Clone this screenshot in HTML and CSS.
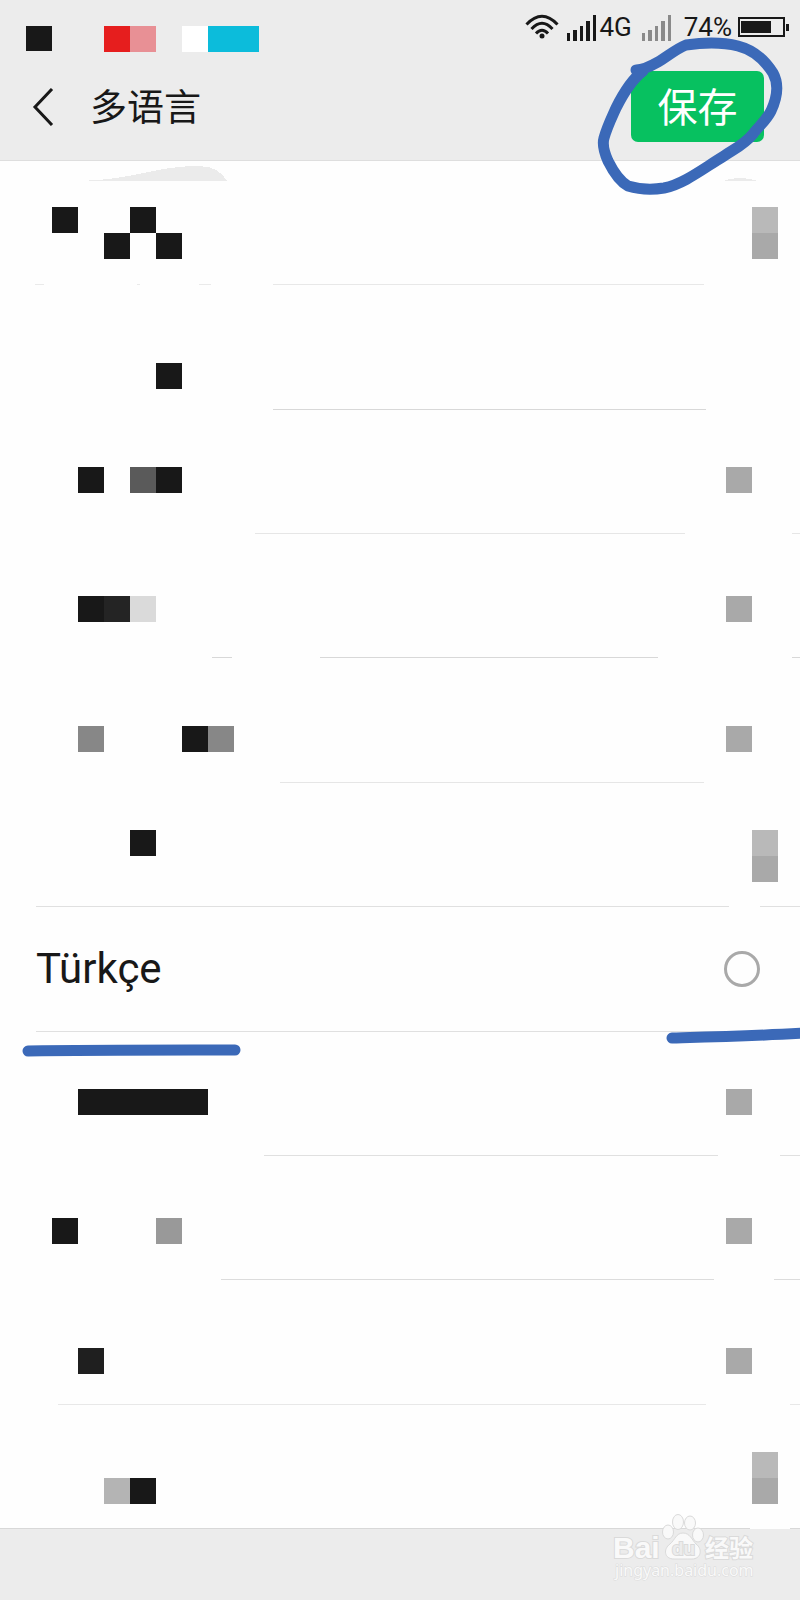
FILE: index.html
```html
<!DOCTYPE html>
<html lang="zh">
<head>
    <meta charset="UTF-8">
    <meta name="viewport" content="width=device-width, initial-scale=1">
    <title>多语言</title>
    <link rel="stylesheet" href="styles.css">
</head>
<body>
<header class="header">
    <div class="status-bar">
        <svg class="status-blocks" width="260" height="53" shape-rendering="crispEdges">
            <rect x="26" y="26" width="26" height="25" fill="#181818"/>
            <rect x="104" y="26" width="26" height="26" fill="#e61e1e"/>
            <rect x="130" y="26" width="26" height="26" fill="#e89095"/>
            <rect x="182" y="26" width="26" height="26" fill="#fff"/>
            <rect x="208" y="26" width="51" height="26" fill="#0cbcdb"/>
        </svg>
        <div class="status-icons">
            <svg class="wifi" width="34" height="26" fill="none" stroke="#181818" stroke-width="3">
                <path d="M1.500 10.500 Q17 -6 32.500 10.500"/>
                <path d="M6.500 15 Q17 3.500 27.500 15"/>
                <path d="M11 19.500 Q17 13 23 19.500"/>
                <circle cx="17" cy="22" r="2.500" fill="#181818" stroke="none"/>
            </svg>
            <svg class="signal" width="30" height="27" fill="#181818">
                <path d="M0 19h3v8h-3zM6 16h4v11h-4zM13 12h3v15h-3zM19 7h4v20h-4zM26 1h3v26h-3z"/>
            </svg>
            <span class="network">4G</span>
            <svg class="signal signal-off" width="30" height="27" fill="#8a8a8a">
                <path d="M0 19h3v8h-3zM6 16h4v11h-4zM13 12h3v15h-3zM19 7h4v20h-4zM26 1h3v26h-3z"/>
            </svg>
            <span class="battery-text">74%</span>
            <svg class="battery" width="52" height="21">
                <rect x="1" y="1" width="45" height="18" fill="none" stroke="#181818" stroke-width="2"/>
                <rect x="3" y="4" width="30" height="12" fill="#181818"/>
                <rect x="48" y="7" width="3" height="7" fill="#181818"/>
            </svg>
        </div>
    </div>
    <div class="title-bar">
        <a class="back" href="#" aria-label="返回">
            <svg width="22" height="38" fill="none" stroke="#181818" stroke-width="3">
                <path d="M20 1 L3 19 L20 37"/>
            </svg>
        </a>
        <h1 class="title">多语言</h1>
        <button class="save" type="button">保存</button>
    </div>
    <svg class="pen pen-circle" width="200" height="200">
        <path d="M36 70 C42 70 51 66 58 62 C68 56 76 49 86 45 C100 43 122 42 138 46 C154 50 166 62 173 73 C179 84 178 96 171 111 C166 121 158 127 153 134 C144 145 134 149 124 156 C104 168 84 184 64 188 C52 190 38 189 28 186 C19 181 13 171 8 161 C4 152 2 145 4 138 C7 127 12 117 16 108 C22 96 31 80 43 71"/>
    </svg>
</header>

<form class="list">
    <div class="row row-1">
        <div class="cells">
            <svg width="260" height="124">
                <path d="M78 20 C135 19 154 5 198 5 C213 5 221 10 227 20z" fill="#ebebeb"/>
                <path d="M52 46h26v26h-26zM130 46h26v26h-26zM104 72h26v26h-26zM156 72h26v26h-26z" fill="#181818"/>
                <path d="M35 123h9v1h-9zM137 123h3v1h-3zM199 123h12v1h-12z" fill="#eaeaea"/>
            </svg>
            <svg width="100" height="124">
                <path d="M23 20 Q39 14 58 20z" fill="#ebebeb"/>
                <rect x="52" y="46" width="26" height="26" fill="#b9b9b9"/>
                <rect x="52" y="72" width="26" height="26" fill="#a9a9a9"/>
            </svg>
        </div>
        <div class="rule"><span class="line"></span><span class="tail"></span></div>
    </div>
    <div class="row row-2">
        <div class="cells">
            <svg width="260" height="124">
                <rect x="156" y="78" width="26" height="26" fill="#181818"/>
            </svg>
        </div>
        <div class="rule"><span class="line"></span><span class="tail"></span></div>
    </div>
    <div class="row row-3">
        <div class="cells">
            <svg width="260" height="124">
                <rect x="78" y="57" width="26" height="26" fill="#181818"/>
                <rect x="130" y="57" width="26" height="26" fill="#5a5a5a"/>
                <rect x="156" y="57" width="26" height="26" fill="#181818"/>
            </svg>
            <svg width="100" height="124">
                <rect x="26" y="57" width="26" height="26" fill="#a9a9a9"/>
            </svg>
        </div>
        <div class="rule"><span class="line"></span><span class="tail"></span></div>
    </div>
    <div class="row row-4">
        <div class="cells">
            <svg width="260" height="124">
                <rect x="78" y="62" width="26" height="26" fill="#181818"/>
                <rect x="104" y="62" width="26" height="26" fill="#242424"/>
                <rect x="130" y="62" width="26" height="26" fill="#dadada"/>
                <rect x="212" y="123" width="20" height="1" fill="#d8d8d8"/>
            </svg>
            <svg width="100" height="124">
                <rect x="26" y="62" width="26" height="26" fill="#a9a9a9"/>
            </svg>
        </div>
        <div class="rule"><span class="line"></span><span class="tail"></span></div>
    </div>
    <div class="row row-5">
        <div class="cells">
            <svg width="260" height="124">
                <rect x="78" y="68" width="26" height="26" fill="#878787"/>
                <rect x="182" y="68" width="26" height="26" fill="#181818"/>
                <rect x="208" y="68" width="26" height="26" fill="#878787"/>
            </svg>
            <svg width="100" height="124">
                <rect x="26" y="68" width="26" height="26" fill="#a9a9a9"/>
            </svg>
        </div>
        <div class="rule"><span class="line"></span><span class="tail"></span></div>
    </div>
    <div class="row row-6">
        <div class="cells">
            <svg width="260" height="124">
                <rect x="130" y="47" width="26" height="26" fill="#181818"/>
            </svg>
            <svg width="100" height="124">
                <rect x="52" y="47" width="26" height="26" fill="#b9b9b9"/>
                <rect x="52" y="73" width="26" height="26" fill="#a9a9a9"/>
            </svg>
        </div>
        <div class="rule"><span class="line"></span><span class="tail"></span></div>
    </div>
    <div class="row row-7">
        <label class="option" for="lang-tr">
            <span class="option-name" lang="tr">Türkçe</span>
            <input class="option-radio" type="radio" name="lang" id="lang-tr">
        </label>
        <div class="rule"><span class="line"></span><span class="tail"></span></div>
        <svg class="pen pen-left" width="260" height="40">
            <path d="M28 19 C80 18 160 18 195 18 L235 18"/>
        </svg>
        <svg class="pen pen-right" width="140" height="20">
            <path d="M12 6 C50 5 95 4 146 1"/>
        </svg>
    </div>
    <div class="row row-8">
        <div class="cells">
            <svg width="260" height="124">
                <rect x="78" y="57" width="130" height="26" fill="#181818"/>
            </svg>
            <svg width="100" height="124">
                <rect x="26" y="57" width="26" height="26" fill="#a9a9a9"/>
            </svg>
        </div>
        <div class="rule"><span class="line"></span><span class="tail"></span></div>
    </div>
    <div class="row row-9">
        <div class="cells">
            <svg width="260" height="124">
                <rect x="52" y="62" width="26" height="26" fill="#181818"/>
                <rect x="156" y="62" width="26" height="26" fill="#999"/>
            </svg>
            <svg width="100" height="124">
                <rect x="26" y="62" width="26" height="26" fill="#a9a9a9"/>
            </svg>
        </div>
        <div class="rule"><span class="line"></span><span class="tail"></span></div>
    </div>
    <div class="row row-10">
        <div class="cells">
            <svg width="260" height="124">
                <rect x="78" y="68" width="26" height="26" fill="#1f1f1f"/>
            </svg>
            <svg width="100" height="124">
                <rect x="26" y="68" width="26" height="26" fill="#a9a9a9"/>
            </svg>
        </div>
        <div class="rule"><span class="line"></span><span class="tail"></span></div>
    </div>
    <div class="row row-11">
        <div class="cells">
            <svg width="260" height="124">
                <rect x="104" y="73" width="26" height="26" fill="#b4b4b4"/>
                <rect x="130" y="73" width="26" height="26" fill="#181818"/>
            </svg>
            <svg width="100" height="124">
                <rect x="52" y="47" width="26" height="26" fill="#b9b9b9"/>
                <rect x="52" y="73" width="26" height="26" fill="#a9a9a9"/>
            </svg>
        </div>
        <div class="rule"><span class="line"></span><span class="tail"></span></div>
    </div>
</form>

<footer class="footer">
    <svg class="watermark" width="200" height="100">
        <g fill="#f9f9f9" stroke="#dadada" stroke-width="1">
            <ellipse cx="68" cy="32" rx="5.500" ry="7"/>
            <ellipse cx="78" cy="22" rx="5.500" ry="7.500"/>
            <ellipse cx="90" cy="23" rx="5.500" ry="7"/>
            <ellipse cx="98" cy="35" rx="5.500" ry="7"/>
            <path d="M83 33 C90 33 92 40 96 44 C103 49 101 59 92 59 C87 59 79 59 74 59 C64 59 63 49 70 44 C75 40 76 33 83 33z"/>
        </g>
        <text class="mark mark-bai" x="13" y="58">Bai</text>
        <text class="mark mark-du" x="72" y="55">du</text>
        <text class="mark mark-cn" x="105" y="57">经验</text>
        <text class="mark mark-url" x="15" y="76">jingyan.baidu.com</text>
    </svg>
</footer>
</body>
</html>
```
FILE: styles.css
```css
* {
    box-sizing: border-box;
}

body {
    margin: 0;
    min-height: 100vh;
    display: flex;
    flex-direction: column;
    background-color: #fefefe;
    color: #181818;
    font-family: Roboto, "Noto Sans CJK SC", sans-serif;
    overflow-x: hidden;
}

svg {
    display: block;
    flex-shrink: 0;
}

.header {
    position: relative;
    background-color: #ececec;
    border-bottom: 1px solid #dedede;
}

.status-bar {
    display: flex;
    justify-content: space-between;
    height: 53px;
}

.status-icons {
    display: flex;
    align-items: center;
    height: 54px;
    padding-right: 10px;
    font-size: 26px;
    line-height: 54px;
}

.signal {
    margin-left: 8px;
}

.network {
    margin-left: 2px;
}

.signal-off {
    margin-left: 10px;
}

.battery-text {
    margin-left: 12px;
}

.battery {
    margin-left: 6px;
}

.title-bar {
    display: flex;
    align-items: center;
    height: 107px;
    padding: 0 36px 0 32px;
}

.back {
    margin-right: 36px;
}

.title {
    flex: 1;
    margin: 0;
    padding-top: 4px;
    font-size: 37px;
    font-weight: 400;
    line-height: 56px;
}

.save {
    width: 133px;
    height: 71px;
    padding: 4px 0 0;
    border: none;
    border-radius: 7px;
    background-color: #07c160;
    color: #fff;
    font-family: inherit;
    font-size: 40px;
    line-height: 60px;
}

/* hand drawn marks */
.pen {
    position: absolute;
    z-index: 2;
    fill: none;
    stroke: #3b69b8;
    stroke-width: 11px;
    stroke-linecap: round;
    stroke-linejoin: round;
    pointer-events: none;
}

.pen-circle {
    top: 0;
    right: 0;
    overflow: visible;
}

.pen-left {
    top: 100%;
    left: 0;
}

.pen-right {
    top: 100%;
    right: 0;
    overflow: visible;
}

.list {
    flex: 1;
    display: flex;
    flex-direction: column;
}

.row {
    --start: 36px;
    --gap: 0px;
    --tail: 0px;
    --color: #e0e0e0;
    position: relative;
    flex: 1 0 124px;
    min-height: 124px;
    display: flex;
    flex-direction: column;
}

.cells {
    flex: 1;
    display: flex;
    justify-content: space-between;
    min-height: 0;
    shape-rendering: crispEdges;
}

/* divider: a long line, a gap and a short piece at the right edge */
.rule {
    display: flex;
    gap: var(--gap);
    height: 1px;
    padding-left: var(--start);
}

.line {
    flex: 1;
    background-color: var(--color);
}

.tail {
    width: var(--tail);
    background-color: var(--color);
}

.row-1 {
    --start: 273px;
    --gap: 96px;
    --color: #e8e8e8;
}

.row-2 {
    --start: 273px;
    --gap: 94px;
    --color: #d8d8d8;
}

.row-3 {
    --start: 255px;
    --gap: 107px;
    --tail: 8px;
    --color: #e6e6e6;
}

.row-4 {
    --start: 320px;
    --gap: 134px;
    --tail: 8px;
    --color: #d8d8d8;
}

.row-5 {
    --start: 280px;
    --gap: 96px;
    --color: #e6e6e6;
}

.row-6 {
    --gap: 31px;
    --tail: 40px;
}

.row-8 {
    --start: 264px;
    --gap: 62px;
    --tail: 20px;
}

.row-9 {
    --start: 221px;
    --gap: 60px;
    --tail: 26px;
    --color: #dcdcdc;
}

.row-10 {
    --start: 58px;
    --gap: 84px;
    --tail: 10px;
    --color: #e8e8e8;
}

.row-11 {
    --start: 0px;
    --gap: 40px;
    --tail: 10px;
    --color: #d8d8d8;
}

.option {
    flex: 1;
    display: flex;
    align-items: center;
    justify-content: space-between;
    padding: 0 40px 0 36px;
}

.option-name {
    font-size: 42px;
    line-height: 50px;
}

.option-radio {
    appearance: none;
    width: 36px;
    height: 36px;
    margin: 0;
    border: 3px solid #a9a9a9;
    border-radius: 50%;
}

.option-radio:checked {
    border: 11px solid #07c160;
}

.footer {
    position: relative;
    height: 71px;
    background-color: #ececec;
}

.watermark {
    position: absolute;
    right: 0;
    bottom: 0;
}

.mark {
    fill: #f9f9f9;
    stroke: #dadada;
    stroke-width: 2px;
    paint-order: stroke;
}

.mark-bai {
    font: bold 30px "Liberation Sans", sans-serif;
}

.mark-du {
    fill: #ececec;
    font: bold 19px "Liberation Sans", sans-serif;
}

.mark-cn {
    font: bold 24px "Noto Sans CJK SC", sans-serif;
}

.mark-url {
    stroke-width: 1px;
    font: 16px "Noto Sans", sans-serif;
}
```
